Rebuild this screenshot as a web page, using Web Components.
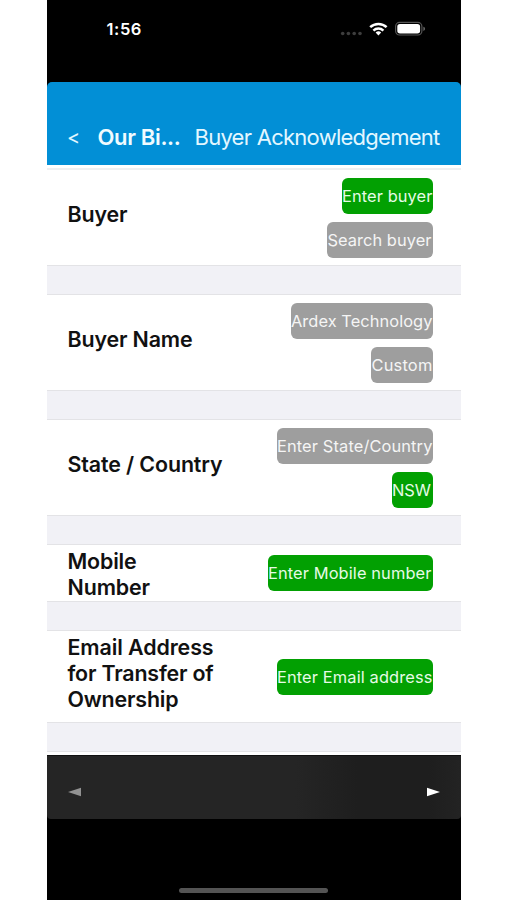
<!DOCTYPE html>
<html lang="en">
<head>
<meta charset="utf-8">
<title>Buyer Acknowledgement</title>
<style>
html, body { margin: 0; background: #fff; font-family: Inter, "Liberation Sans", sans-serif; }
</style>
</head>
<body>
<phone-screen>
  <status-bar time="1:56"></status-bar>
  <nav-header></nav-header>
  <form-list></form-list>
  <page-toolbar></page-toolbar>
  <home-indicator></home-indicator>
</phone-screen>
<script>
function define(name, markup, setup) {
  const template = document.createElement('template');
  template.innerHTML = markup;
  customElements.define(name, class extends HTMLElement {
    connectedCallback() {
      if (this.shadowRoot) return;
      const root = this.attachShadow({ mode: 'open' });
      root.append(template.content.cloneNode(true));
      if (setup) setup(this, root);
    }
  });
}

define('phone-screen', `
<style>:host { display: flex; flex-direction: column; width: 414.5px; height: 900px; margin-left: 46.5px; background: #000; overflow: hidden; }</style>
<slot></slot>`);

// Tracks a line of text out or in so that it takes the given width.
define('fit-text', `
<style>:host { display: block; white-space: nowrap; } span { display: inline-block; }</style>
<span></span>`, (host, root) => {
  const span = root.querySelector('span');
  span.textContent = host.getAttribute('text');
  const width = +host.getAttribute('width');
  host.style.width = width + 'px';
  const natural = span.getBoundingClientRect().width;
  span.style.letterSpacing = (width - natural) / span.textContent.length + 'px';
});

define('status-bar', `
<style>
:host { display: flex; box-sizing: border-box; height: 82px; flex: none; padding: 19px 35px 0 60px; justify-content: space-between; color: #fff; background: #000; }
fit-text { font-size: 16.5px; font-weight: 600; line-height: 21px; }
svg { display: block; }
</style>
<fit-text text="1:56" width="35.5"></fit-text>
<svg width="86" height="20" viewBox="340 19 86 20">
  <g fill="#3d3d3d"><circle cx="342.7" cy="33.5" r="1.8"/><circle cx="348.4" cy="33.5" r="1.8"/><circle cx="354.2" cy="33.5" r="1.8"/><circle cx="360" cy="33.5" r="1.8"/></g>
  <g fill="none" stroke="#fff" stroke-width="2.5"><path d="M370.2 27.2a11.8 11.8 0 0 1 16.4 0"/><path d="M373.4 30.6a7.3 7.3 0 0 1 10 0"/></g>
  <path d="M378.4 35.4l-2.8-2.8a4.1 4.1 0 0 1 5.6 0z" fill="#fff"/>
  <rect x="395.6" y="22.4" width="26.3" height="12.6" rx="4" fill="none" stroke="#555" stroke-width="1.2"/>
  <rect x="397.3" y="24" width="22.8" height="9.4" rx="2.7" fill="#fff"/>
  <path d="M423.4 26.7c2.2.6 2.2 3.6 0 4.2z" fill="#666"/>
</svg>`);

define('nav-header', `
<style>
:host { display: flex; box-sizing: border-box; height: 83px; flex: none; padding: 40px 0 0 20.5px; background: #028fd6; border-radius: 5px 5px 0 0; color: #e3f7ff; font-size: 22px; line-height: 30px; }
.back { width: 30.5px; }
.previous { width: 97px; font-weight: 600; color: #f0fbff; }
.back fit-text { font-size: 20px; line-height: 31px; }
</style>
<div class="back"><fit-text text="&lt;" width="14"></fit-text></div>
<div class="previous"><fit-text text="Our Bi..." width="83"></fit-text></div>
<fit-text text="Buyer Acknowledgement" width="245"></fit-text>`);

define('choice-chip', `
<style>
:host { display: block; box-sizing: border-box; height: 36px; padding-left: .5px; border-radius: 6px; background: #9e9e9e; color: #f5f5f5; font-size: 16.4px; line-height: 36px; }
:host([selected]) { background: #02a002; color: #e6fbe6; }
</style>
<fit-text></fit-text>`, (host, root) => {
  const width = +host.getAttribute('width');
  host.style.width = width + 'px';
  const text = document.createElement('fit-text');
  text.setAttribute('text', host.getAttribute('text'));
  text.setAttribute('width', host.getAttribute('ink') || width - 0.5);
  root.querySelector('fit-text').replaceWith(text);
});

define('form-row', `
<style>
:host { display: flex; box-sizing: border-box; align-items: center; justify-content: space-between; padding: 0 28.5px 0 21px; background: #fff; }
.label { color: #111; font-size: 21.4px; font-weight: 600; line-height: 26px; padding-bottom: var(--label-lift, 7px); padding-top: var(--label-drop, 0px); }
.chips { display: flex; flex-direction: column; align-items: flex-end; gap: 8px; }
</style>
<div class="label"><slot name="label"></slot></div>
<div class="chips"><slot></slot></div>`);

define('section-gap', `
<style>:host { display: block; box-sizing: border-box; height: 30px; background: #f1f1f6; border: solid #e3e3e6; border-width: 1px 0; }</style>`);

define('form-list', `
<style>
:host { display: block; box-sizing: border-box; height: 590px; flex: none; background: #fff; padding-top: 3px; }
.rule { height: 2px; background: #efeff1; }
form-row { height: 95px; }
form-row.mobile { height: 56px; --label-lift: 0px; --label-drop: 1px; }
form-row.email { height: 91px; --label-lift: 8px; }
</style>
<div class="rule"></div>
<form-row>
  <fit-text slot="label" text="Buyer" width="60"></fit-text>
  <choice-chip selected text="Enter buyer" width="91"></choice-chip>
  <choice-chip text="Search buyer" width="105.5" ink="104"></choice-chip>
</form-row>
<section-gap></section-gap>
<form-row>
  <fit-text slot="label" text="Buyer Name" width="125"></fit-text>
  <choice-chip text="Ardex Technology" width="142"></choice-chip>
  <choice-chip text="Custom" width="61.5"></choice-chip>
</form-row>
<section-gap></section-gap>
<form-row>
  <fit-text slot="label" text="State / Country" width="155"></fit-text>
  <choice-chip text="Enter State/Country" width="156"></choice-chip>
  <choice-chip selected text="NSW" width="41" ink="39"></choice-chip>
</form-row>
<section-gap></section-gap>
<form-row class="mobile">
  <fit-text slot="label" text="Mobile" width="69"></fit-text>
  <fit-text slot="label" text="Number" width="82.5"></fit-text>
  <choice-chip selected text="Enter Mobile number" width="165" ink="163.5"></choice-chip>
</form-row>
<section-gap></section-gap>
<form-row class="email">
  <fit-text slot="label" text="Email Address" width="146"></fit-text>
  <fit-text slot="label" text="for Transfer of" width="146"></fit-text>
  <fit-text slot="label" text="Ownership" width="111"></fit-text>
  <choice-chip selected text="Enter Email address" width="156"></choice-chip>
</form-row>
<section-gap></section-gap>`);

define('page-toolbar', `
<style>
:host { display: flex; box-sizing: border-box; flex: none; height: 64px; padding: 5px 21px 0; align-items: center; justify-content: space-between; border-top: 1px solid #111; border-radius: 0 0 4px 4px; background: linear-gradient(90deg, #252525 0 60%, #1e1e1e 75% 92%, #232323); }
svg { display: block; margin-top: 3px; }
</style>
<svg width="13" height="10"><path d="M0 5L13 .7V9.3z" fill="#929292"/></svg>
<svg width="13" height="10"><path d="M13 5L0 .7V9.3z" fill="#fff"/></svg>`);

define('home-indicator', `
<style>
:host { display: flex; flex: 1; align-items: flex-end; justify-content: center; padding-bottom: 7.5px; background: #000; }
div { width: 149px; height: 5px; border-radius: 3px; background: #545454; }
</style>
<div></div>`);
</script>
</body>
</html>
